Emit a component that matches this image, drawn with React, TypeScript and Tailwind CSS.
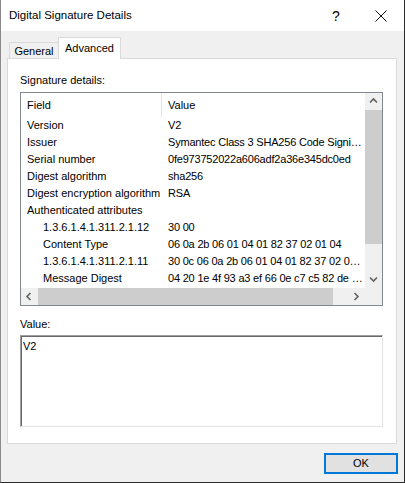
import React from "react";

const rows: { f: string; v: string; indent?: boolean }[] = [
  { f: "Version", v: "V2" },
  { f: "Issuer", v: "Symantec Class 3 SHA256 Code Signing CA" },
  { f: "Serial number", v: "0fe973752022a606adf2a36e345dc0ed" },
  { f: "Digest algorithm", v: "sha256" },
  { f: "Digest encryption algorithm", v: "RSA" },
  { f: "Authenticated attributes", v: "" },
  { f: "1.3.6.1.4.1.311.2.1.12", v: "30 00", indent: true },
  { f: "Content Type", v: "06 0a 2b 06 01 04 01 82 37 02 01 04", indent: true },
  { f: "1.3.6.1.4.1.311.2.1.11", v: "30 0c 06 0a 2b 06 01 04 01 82 37 02 01 15", indent: true },
  { f: "Message Digest", v: "04 20 1e 4f 93 a3 ef 66 0e c7 c5 82 de 5a 3b 91 c2", indent: true },
];

function Chevron({ dir }: { dir: "up" | "down" | "left" | "right" }) {
  const d =
    dir === "up"
      ? "M1 5.5 L4.5 2 L8 5.5"
      : dir === "down"
      ? "M1 2.5 L4.5 6 L8 2.5"
      : dir === "left"
      ? "M5.5 1 L2 4.5 L5.5 8"
      : "M2.5 1 L6 4.5 L2.5 8";
  return (
    <svg width="9" height="9" viewBox="0 0 9 9">
      <path d={d} fill="none" stroke="#606060" strokeWidth="1.6" />
    </svg>
  );
}

export default function App() {
  return (
    <div
      className="w-[405px] h-[483px] flex flex-col bg-[#f0f0f0] border-l border-l-[#8a8a8a] border-r border-r-[#2b2b2b] border-b border-b-[#2b2b2b] text-[11px] text-black overflow-hidden"
      style={{ fontFamily: '"Liberation Sans", Arial, sans-serif' }}
    >
      {/* Title bar */}
      <div className="h-[31px] bg-white flex items-center shrink-0">
        <div className="pl-[8px] pt-[1px] flex-1 leading-none text-[11.5px]">Digital Signature Details</div>
        <div className="w-[20px] text-center text-[14px] mr-[28px] leading-none">?</div>
        <div className="w-[14px] mr-[16px] flex items-center justify-center">
          <svg width="12" height="12" viewBox="0 0 12 12">
            <path d="M0.5 0.5 L11.5 11.5 M11.5 0.5 L0.5 11.5" stroke="#111" strokeWidth="1" fill="none" />
          </svg>
        </div>
      </div>

      {/* Tabs */}
      <div className="flex items-end h-[21px] mt-[6px] pl-[8px] shrink-0">
        <div className="h-[16px] w-[49px] border border-[#d9d9d9] border-b-0 border-r-0 bg-[#f0f0f0] flex items-center justify-center leading-none pt-[1px]">
          General
        </div>
        <div className="relative z-10 h-[22px] -mb-px w-[63px] border border-[#d9d9d9] border-b-0 bg-white flex items-start justify-center leading-none pt-[5px]">
          Advanced
        </div>
      </div>

      {/* Panel */}
      <div className="ml-[6px] w-[390px] h-[386px] border border-[#d9d9d9] bg-white pl-[12px] pr-[13px] pt-[13px] flex flex-col shrink-0">
        <div className="h-[16px] leading-[16px]">Signature details:</div>
        <div className="mt-[4px] h-[214px] border border-[#828790] grid grid-cols-[1fr_17px] grid-rows-[1fr_17px]">
          {/* content */}
          <div className="overflow-hidden">
            <div className="h-[24px] flex items-center">
              <div className="w-[141px] pl-[6px] h-full flex items-center border-r border-[#e5e5e5]">Field</div>
              <div className="pl-[6px]">Value</div>
            </div>
            {rows.map((r, i) => (
              <div key={i} className="h-[17px] flex items-center whitespace-nowrap">
                <div className={`w-[141px] shrink-0 overflow-hidden ${r.indent ? "pl-[22px]" : "pl-[6px]"}`}>{r.f}</div>
                <div className="pl-[6px] pr-[1px] truncate flex-1 min-w-0 tracking-[-0.2px]">{r.v}</div>
              </div>
            ))}
          </div>
          {/* vertical scrollbar */}
          <div className="bg-[#f0f0f0] flex flex-col">
            <div className="h-[17px] flex items-center justify-center">
              <Chevron dir="up" />
            </div>
            <div className="h-[134px] bg-[#cdcdcd]" />
            <div className="flex-1" />
            <div className="h-[17px] flex items-center justify-center">
              <Chevron dir="down" />
            </div>
          </div>
          {/* horizontal scrollbar */}
          <div className="bg-[#f0f0f0] flex">
            <div className="w-[17px] flex items-center justify-center">
              <Chevron dir="left" />
            </div>
            <div className="w-[295px] bg-[#cdcdcd]" />
            <div className="flex-1" />
            <div className="w-[17px] flex items-center justify-center">
              <Chevron dir="right" />
            </div>
          </div>
          <div className="bg-[#f0f0f0]" />
        </div>
        <div className="mt-[10px] h-[16px] leading-[16px]">Value:</div>
        <div className="mt-[3px] h-[92px] border-t border-l border-[#a0a0a0] border-r border-b border-r-[#e3e3e3] border-b-[#e3e3e3]">
          <div className="h-full border-t border-l border-[#696969] pl-[1px] pt-[1px] leading-[16px]">V2</div>
        </div>
      </div>

      {/* Footer */}
      <div className="flex justify-end pr-[6px] pt-[9px]">
        <div className="w-[74px] h-[21px] border-2 border-[#0078d7] bg-[#e1e1e1] flex items-center justify-center leading-none">
          OK
        </div>
      </div>
    </div>
  );
}
